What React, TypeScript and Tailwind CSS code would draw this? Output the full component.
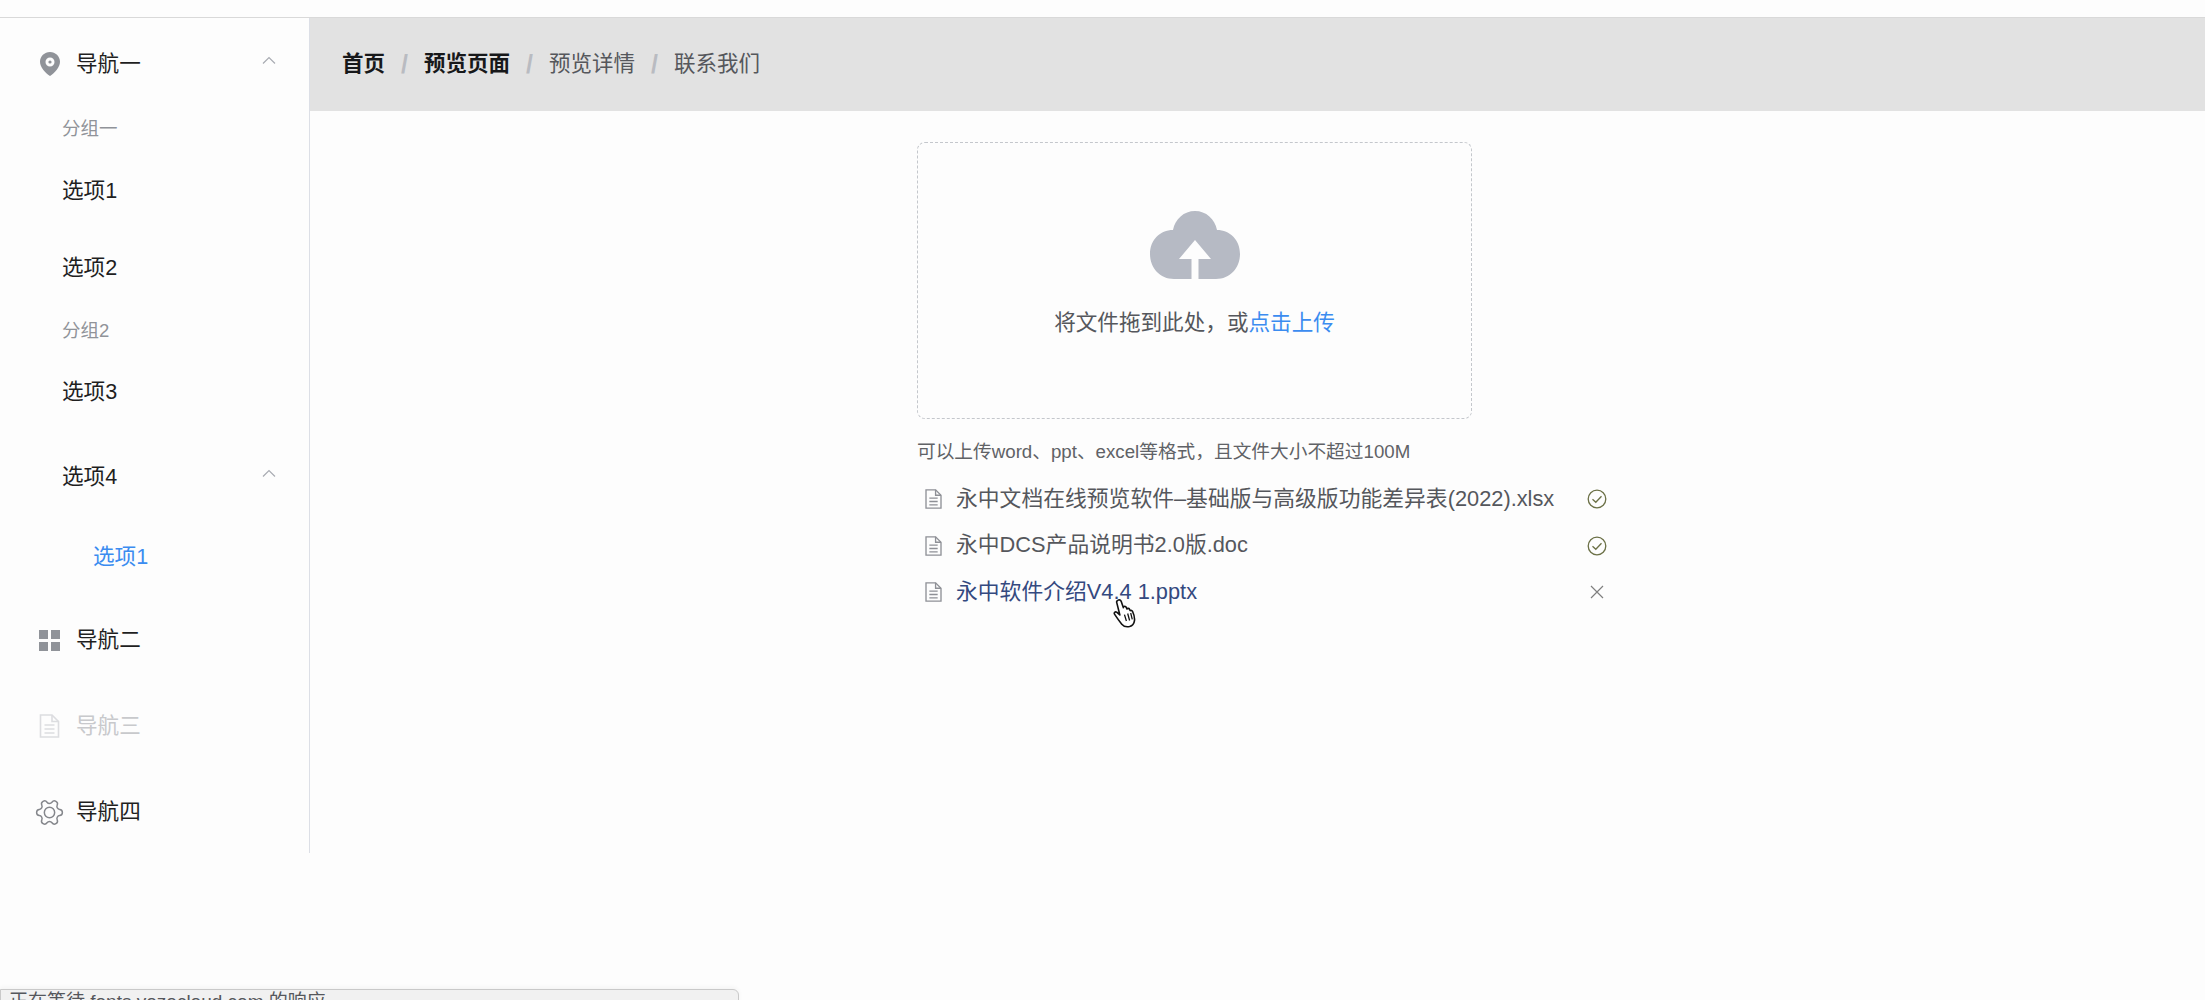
const FONT = "font-['Liberation_Sans','Noto_Sans_CJK_SC',sans-serif]";

function LocationIcon() {
  return (
    <svg width="20" height="24" viewBox="0 0 20 24" fill="none">
      <path
        fillRule="evenodd"
        d="M10 0C4.500 0 0 4.300 0 9.700c0 5.600 5.200 10.800 10 14.300 4.800-3.500 10-8.700 10-14.300C20 4.300 15.500 0 10 0Zm0 5.500a4.500 4.500 0 1 1 0 9 4.500 4.500 0 0 1 0-9Z"
        fill="#909399"
      />
      <circle cx="10" cy="10" r="1.600" fill="#909399" />
    </svg>
  );
}

function GridIcon() {
  return (
    <svg width="21" height="21" viewBox="0 0 21 21" fill="#909399">
      <rect x="0" y="0" width="9" height="9" />
      <rect x="12" y="0" width="9" height="9" />
      <rect x="0" y="12" width="9" height="9" />
      <rect x="12" y="12" width="9" height="9" />
    </svg>
  );
}

function DocIcon({ color, w, h }: { color: string; w: number; h: number }) {
  return (
    <svg width={w} height={h} viewBox="0 0 20 24" fill="none" stroke={color} strokeWidth="1.600">
      <path d="M1 1h11.500L19 7.500V23H1Z" />
      <path d="M12.500 1v6.500H19" />
      <path d="M5 11h10M5 15h10M5 19h10" />
    </svg>
  );
}

function GearIcon() {
  return (
    <svg className="shrink-0" width="31" height="31" viewBox="0 0 24 24" fill="none" stroke="#85878c" strokeWidth="1.150" strokeLinejoin="round">
      <path
        transform="rotate(30 12 12)"
        d="M9.671 4.136a2.340 2.340 0 0 1 4.659 0 2.340 2.340 0 0 0 3.319 1.915 2.340 2.340 0 0 1 2.330 4.033 2.340 2.340 0 0 0 0 3.831 2.340 2.340 0 0 1-2.330 4.033 2.340 2.340 0 0 0-3.319 1.915 2.340 2.340 0 0 1-4.659 0 2.340 2.340 0 0 0-3.320-1.915 2.340 2.340 0 0 1-2.330-4.033 2.340 2.340 0 0 0 0-3.831A2.340 2.340 0 0 1 6.350 6.051a2.340 2.340 0 0 0 3.320-1.915"
      />
      <circle cx="12" cy="12" r="4" />
    </svg>
  );
}

function Chevron() {
  return (
    <svg width="14" height="8" viewBox="0 0 14 8" fill="none" stroke="#a8abb2" strokeWidth="1.200">
      <path d="M1 7.500 7 1.500l6 6" />
    </svg>
  );
}

function CloudUpload() {
  return (
    <svg width="90" height="68" viewBox="0 0 90 68">
      <path
        d="M45 0c11 0 20 8 22 19 13 0 23 10 23 24 0 14-10 25-24 25H48.500V48H61L45 29 29 48h12.500v20H24C10 68 0 57 0 43c0-14 10-24 23-24C25 8 34 0 45 0Z"
        fill="#b6bac4"
      />
    </svg>
  );
}

function CheckCircle() {
  return (
    <svg width="20" height="20" viewBox="0 0 20 20" fill="none" stroke="#6b7046" strokeWidth="1.300">
      <circle cx="10" cy="10" r="8.800" />
      <path d="M5.500 10.200 8.800 13.300 14.500 7.200" />
    </svg>
  );
}

function CloseIcon() {
  return (
    <svg width="14" height="14" viewBox="0 0 14 14" fill="none" stroke="#7f7f7f" strokeWidth="1.200">
      <path d="M1 1l12 12M13 1 1 13" />
    </svg>
  );
}

function HandCursor() {
  return (
    <svg width="26" height="30" viewBox="0 0 24 28">
      <path
        d="M5.500 2c1.300-.6 2.500 0 3 1.300l2 5.700.3-1c1-.6 2 0 2.400.8l.6 1.400c.6-.8 1.800-.7 2.300.1l.8 1.500c.7-.5 1.700-.2 2.100.6 1.200 2.600 2.200 6.300 1.800 9-.3 2.500-2 4.600-4.500 5.200-2.800.6-5.500.1-7.300-2.100C7 22 4.200 18 2.200 15c-.7-1.100.6-2.600 2-1.800l3 2.600L4.300 4.300C4 3.300 4.500 2.400 5.500 2Z"
        fill="#ffffff"
        stroke="#111111"
        strokeWidth="1.500"
        strokeLinejoin="round"
      />
      <path d="M11.500 15.500l1.800 6M14.500 14.500l1.800 6.500M17.300 14l1.500 6" stroke="#111111" strokeWidth="1.200" fill="none" />
    </svg>
  );
}

function NavTitle({ icon, label, disabled, arrow, heightClass }: { icon: React.ReactNode; label: string; disabled?: boolean; arrow?: boolean; heightClass: string }) {
  return (
    <div className={`flex items-center pl-[37px] pr-[33px] ${heightClass}`}>
      <div className="mr-[14px] flex w-[25px] shrink-0 items-center justify-center">{icon}</div>
      <span className={`text-[21.6px] ${disabled ? "text-[#c8c9cc]" : "text-[#1f1f1f]"}`}>{label}</span>
      {arrow && <span className="mb-[8px] ml-auto flex"><Chevron /></span>}
    </div>
  );
}

function Slash() {
  return <span className="w-[39px] text-center text-[25px] leading-none font-bold text-[#b9bbc1]">/</span>;
}

const FILES = [
  { name: "永中文档在线预览软件–基础版与高级版功能差异表(2022).xlsx", done: true },
  { name: "永中DCS产品说明书2.0版.doc", done: true },
  { name: "永中软件介绍V4.4 1.pptx", done: false },
];

export default function App() {
  return (
    <div className={`${FONT} relative h-screen overflow-hidden bg-[#fdfdfd]`}>
      <div className="h-[18px] border-b border-[#d9d9d9]" />
      <div className="flex items-start">
        {/* Side menu */}
        <aside className="h-[835px] w-[310px] shrink-0 border-r border-[#dcdfe6]">
          <NavTitle icon={<LocationIcon />} label="导航一" arrow heightClass="h-[92px]" />
          <div className="flex h-[38px] items-center pl-[62px] text-[18.5px] text-[#909399]">分组一</div>
          <div className="h-[5px]" />
          <div className="flex h-[77px] items-center pl-[62px] text-[21.6px] text-[#1f1f1f]">选项1</div>
          <div className="flex h-[77px] items-center pl-[62px] text-[21.6px] text-[#1f1f1f]">选项2</div>
          <div className="flex h-[47px] items-center pl-[62px] text-[18.5px] text-[#909399]">分组2</div>
          <div className="flex h-[76px] items-center pl-[62px] text-[21.6px] text-[#1f1f1f]">选项3</div>
          <div className="flex h-[94px] items-center pr-[33px] pl-[62px] text-[21.6px] text-[#1f1f1f]">
            选项4
            <span className="mb-[8px] ml-auto flex"><Chevron /></span>
          </div>
          <div className="flex h-[67px] items-center pl-[93px] text-[21.6px] text-[#3b8cf0]">选项1</div>
          <div className="h-[6px]" />
          <NavTitle icon={<GridIcon />} label="导航二" heightClass="h-[86px]" />
          <NavTitle icon={<DocIcon color="#dcdde0" w={21} h={24} />} label="导航三" disabled heightClass="h-[86px]" />
          <NavTitle icon={<GearIcon />} label="导航四" heightClass="h-[86px]" />
        </aside>

        <main className="min-w-0 flex-1">
          {/* Breadcrumb */}
          <div className="flex h-[93px] items-center bg-[#e2e2e2] pl-[32px] text-[21.5px]">
            <span className="font-bold text-[#17181a]">首页</span>
            <Slash />
            <span className="font-bold text-[#17181a]">预览页面</span>
            <Slash />
            <span className="text-[#55575c]">预览详情</span>
            <Slash />
            <span className="text-[#55575c]">联系我们</span>
          </div>

          <div className="ml-[607px] w-[700px] pt-[31px]">
            {/* Drop zone */}
            <div className="flex h-[277px] w-[555px] flex-col items-center rounded-[8px] border border-dashed border-[#c4c7cc] pt-[68px]">
              <CloudUpload />
              <div className="mt-[28px] text-[21.6px] text-[#55575c]">
                将文件拖到此处，或<span className="text-[#3b8cf0]">点击上传</span>
              </div>
            </div>

            <div className="mt-[22px] text-[18.7px] leading-[22px] text-[#606266]">可以上传word、ppt、excel等格式，且文件大小不超过100M</div>

            {/* File list */}
            <ul className="mt-[13px]">
              {FILES.map((file) => (
                <li key={file.name} className="flex h-[46.5px] items-center pr-[10px] pl-[8px]">
                  <span className="mr-[14px] flex"><DocIcon color="#8e9096" w={17} h={20} /></span>
                  <span className={`text-[21.8px] ${file.done ? "text-[#55575c]" : "text-[#34497f]"}`}>{file.name}</span>
                  <span className="ml-auto flex w-[20px] justify-center">{file.done ? <CheckCircle /> : <CloseIcon />}</span>
                </li>
              ))}
            </ul>
          </div>
        </main>
      </div>

      {/* Mouse pointer over the third file */}
      <div className="absolute top-[598px] left-[1112px]"><HandCursor /></div>

      {/* Browser status bubble */}
      <div className="absolute bottom-[-12px] left-0 h-[23px] w-[739px] rounded-tr-[6px] border border-[#c9c9c9] bg-[#f1f1f1] pl-[8px] text-[19px] leading-[24px] text-[#55575c] shadow-[0_-2px_4px_rgba(0,0,0,0.04)]">
        正在等待 fonts.yozocloud.com 的响应
      </div>
    </div>
  );
}
